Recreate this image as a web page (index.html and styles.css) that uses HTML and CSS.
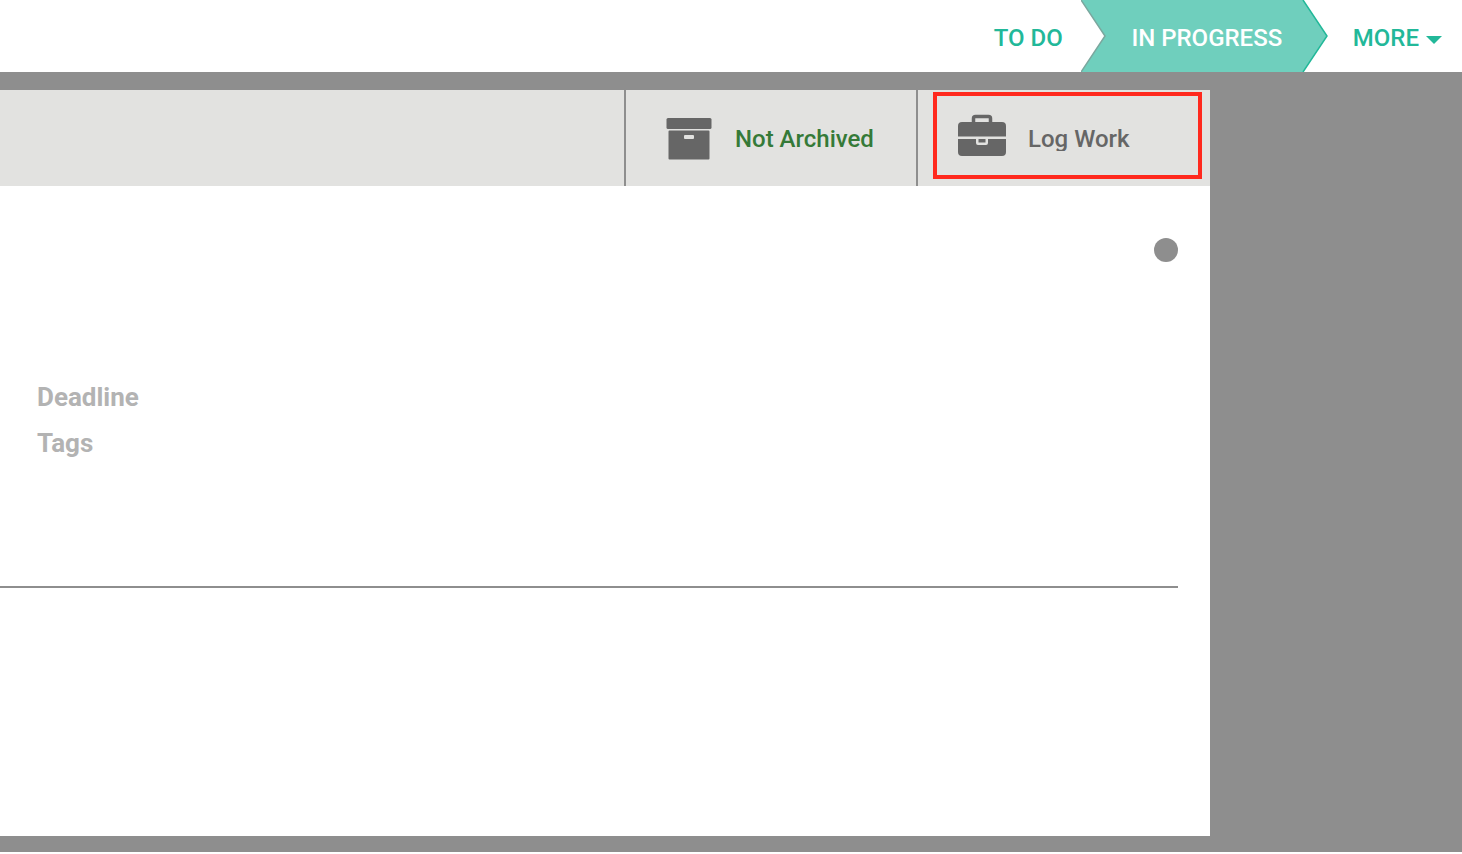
FILE: index.html
```html
<!DOCTYPE html>
<html lang="en">
<head>
<meta charset="utf-8">
<title>Issue</title>
<link rel="stylesheet" href="styles.css">
</head>
<body>
<nav class="workflow">
  <button class="status" type="button">TO DO</button>
  <button class="status status-current" type="button">
    <svg class="status-shape" viewBox="0 0 248 72" preserveAspectRatio="none" aria-hidden="true">
      <path d="M0 0H222L246 36L222 72H0L24 36Z" fill="#6fcfbd"/>
      <path d="M0 0L24 36L0 72" fill="none" stroke="#7ba79e" stroke-width="1.5"/>
      <path d="M222 0L246 36L222 72" fill="none" stroke="#22b899" stroke-width="1.5"/>
    </svg>
    <span class="status-text">IN PROGRESS</span>
  </button>
  <button class="status status-more" type="button">MORE
    <svg class="caret" viewBox="0 0 16 8" aria-hidden="true"><path d="M0 0H16L8 8Z" fill="#22b899"/></svg>
  </button>
</nav>
<main class="panel">
  <div class="toolbar">
    <div class="cell">
      <button class="action action-archive" type="button">
        <svg class="icon" viewBox="0 0 48 48" aria-hidden="true">
          <rect x="1.500" y="3" width="45" height="11" rx="1.500" fill="#666"/>
          <path d="M4.500 15.500H43.500Q44.500 15.500 44.500 16.500V43.500Q44.500 44.500 43.500 44.500H4.500Q3.500 44.500 3.500 43.500V16.500Q3.500 15.500 4.500 15.500ZM20 20Q19 20 19 21V23Q19 24 20 24H28Q29 24 29 23V21Q29 20 28 20Z" fill="#666" fill-rule="evenodd"/>
        </svg>
        <span class="action-label">Not Archived</span>
      </button>
    </div>
    <div class="cell cell-marked">
      <button class="action action-log" type="button">
        <svg class="icon" viewBox="0 0 48 48" aria-hidden="true">
          <path d="M15.500 8V3.500Q15.500 1.500 17.500 1.500H30.500Q32.500 1.500 32.500 3.500V8" fill="none" stroke="#666" stroke-width="3.500"/>
          <path d="M4 7H44Q48 7 48 11V21.500H0V11Q0 7 4 7Z" fill="#666"/>
          <path d="M0 24H18V28Q18 30 20 30H28Q30 30 30 28V24H48V37Q48 41 44 41H4Q0 41 0 37Z" fill="#666"/>
          <path d="M20.500 24H27.500V27.500H20.500Z" fill="#666"/>
        </svg>
        <span class="action-label">Log Work</span>
      </button>
    </div>
  </div>
  <section class="details">
    <span class="dot"></span>
    <dl class="fields">
      <dt>Deadline</dt>
      <dt>Tags</dt>
    </dl>
  </section>
</main>
</body>
</html>
```
FILE: styles.css
```css
* {
  box-sizing: border-box;
}

html {
  background: #fff;
}

body {
  margin: 0;
  min-height: 100vh;
  display: flex;
  flex-direction: column;
  border-bottom: 2px solid #fff;
  background: #8e8e8e;
  font-family: Roboto, "Liberation Sans", sans-serif;
  font-size: 24px;
  font-weight: 500;
}

button {
  margin: 0;
  padding: 0;
  border: 0;
  background: none;
  color: inherit;
  font: inherit;
  cursor: pointer;
}

.workflow {
  height: 72px;
  display: flex;
  justify-content: flex-end;
  padding-right: 20px;
  background: #fff;
  color: #22b899;
}

.status {
  padding: 3px 18px 0;
  white-space: nowrap;
}

.status-current {
  position: relative;
  width: 248px;
  padding: 3px 0 0 4px;
  color: #fff;
}

.status-shape {
  position: absolute;
  inset: 0;
  width: 100%;
  height: 100%;
}

.status-text {
  position: relative;
}

.status-more {
  display: flex;
  align-items: center;
  gap: 7px;
  padding: 3px 0 0 24px;
}

.caret {
  width: 16px;
  height: 8px;
  margin-top: 4px;
}

.panel {
  flex: 1;
  display: flex;
  flex-direction: column;
  margin: 18px 252px 16px 0;
  background: #fff;
}

.toolbar {
  height: 96px;
  display: flex;
  justify-content: flex-end;
  background: #e2e2e0;
}

.cell {
  display: flex;
  flex: 0 0 292px;
  border-left: 2px solid #8e8e8e;
}

.cell-marked {
  flex-basis: 294px;
  padding: 2px 8px 7px 15px;
}

.action {
  flex: 1;
  display: flex;
  align-items: center;
  gap: 22px;
  white-space: nowrap;
}

.action-archive {
  padding: 2px 0 0 39px;
  color: #357a38;
}

.action-log {
  border: 4px solid #ff291e;
  padding: 7px 0 0 21px;
  color: #666;
}

.action-label {
  overflow: hidden;
  line-height: 24px;
}

.icon {
  width: 48px;
  height: 48px;
  overflow: visible;
}

.details {
  display: flex;
  flex-direction: column;
  height: 402px;
  margin-right: 32px;
  padding-top: 52px;
  border-bottom: 2px solid #8e8e8e;
}

.dot {
  width: 24px;
  height: 24px;
  align-self: flex-end;
  border-radius: 50%;
  background: #8e8e8e;
}

.fields {
  margin: 112px 0 0 37px;
  color: #b3b3b3;
  font-size: 26px;
  font-weight: 700;
  line-height: 46px;
}
```
